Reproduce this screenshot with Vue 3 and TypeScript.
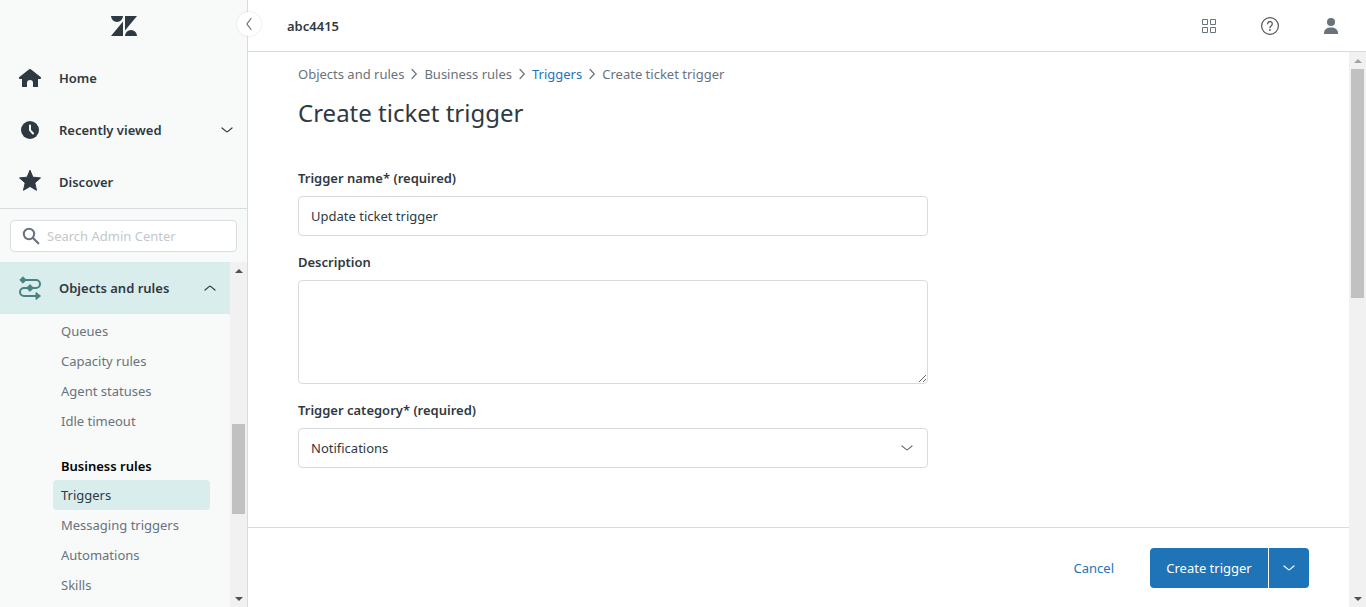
<script setup lang="ts">
import { ref } from 'vue'

interface NavGroup {
  heading?: string
  items: string[]
}

const groups: NavGroup[] = [
  { items: ['Queues', 'Capacity rules', 'Agent statuses', 'Idle timeout'] },
  { heading: 'Business rules', items: ['Triggers', 'Messaging triggers', 'Automations', 'Skills'] },
]

const crumbs: string[] = ['Objects and rules', 'Business rules', 'Triggers']
const activeItem = ref<string>('Triggers')
const search = ref<string>('')
const triggerName = ref<string>('Update ticket trigger')
const description = ref<string>('')
const category = ref<string>('Notifications')
</script>

<template>
  <div class="app">
    <aside class="sidebar">
      <div class="logo">
        <svg width="26" height="20" viewBox="0 0 26 20" role="img" aria-label="Zendesk">
          <path fill="#2f3941" d="M12 5.6V20H0zM12 0a6 6 0 0 1-12 0zM14 20a6 6 0 0 1 12 0zM14 14.4V0h12z" />
        </svg>
      </div>
      <button class="collapse" type="button" aria-label="Collapse sidebar">
        <svg width="16" height="16" viewBox="0 0 16 16">
          <path class="line" d="M10 2.5 6.3 7.4a1 1 0 0 0 0 1.2L10 13.5" />
        </svg>
      </button>

      <nav class="primary">
        <a class="row" href="#home">
          <svg class="row-icon" width="24" height="24" viewBox="0 0 24 24">
            <path fill="#2f3941" d="M11.2 3.300a1.300 1.300 0 0 1 1.600 0l9.800 7.600c.9.700.6 2.100-.6 2.100H20v8h-5v-4a3 3 0 0 0-6 0v4H4v-8H2c-1.200 0-1.500-1.400-.6-2.100z" />
          </svg>
          <span class="row-label">Home</span>
        </a>
        <button class="row" type="button">
          <svg class="row-icon" width="24" height="24" viewBox="0 0 24 24">
            <circle cx="12" cy="12" r="9" fill="#2f3941" />
            <path d="M12 7.500v4.700l3 3.300" fill="none" stroke="#f8faf9" stroke-width="2" stroke-linecap="round" stroke-linejoin="round" />
          </svg>
          <span class="row-label">Recently viewed</span>
          <svg width="16" height="16" viewBox="0 0 16 16">
            <path class="line dark" d="M3 6l4.400 3.600a1 1 0 0 0 1.200 0L13 6" />
          </svg>
        </button>
        <a class="row" href="#discover">
          <svg class="row-icon" width="24" height="24" viewBox="0 0 24 24">
            <path fill="#2f3941" stroke="#2f3941" stroke-linejoin="round" d="M12 .2l2.900 7 7.600.7-5.700 5 1.700 7.400-6.500-3.900-6.500 3.900 1.700-7.400-5.700-5 7.600-.7z" />
          </svg>
          <span class="row-label">Discover</span>
        </a>
      </nav>

      <div class="search-area">
        <label class="search">
          <svg width="18" height="18" viewBox="0 0 18 18">
            <circle cx="7" cy="7" r="5.200" fill="none" stroke="#68737d" stroke-width="2" />
            <path d="M11 11l5.300 5.300" stroke="#68737d" stroke-width="2.200" stroke-linecap="round" />
          </svg>
          <input v-model="search" type="search" aria-label="Search Admin Center" placeholder="Search Admin Center" />
        </label>
      </div>

      <div class="nav-scroll">
        <nav class="nav-body">
          <button class="row section" type="button" aria-expanded="true">
            <svg class="row-icon" width="24" height="24" viewBox="0 0 24 24">
              <path fill="none" stroke="#498283" stroke-width="2" d="M4 4h14a4 4 0 0 1 0 8H6a4 4 0 0 0 0 8h13" />
              <path fill="#498283" stroke="#498283" stroke-linejoin="round" d="M5 .8 8.200 4 5 7.200 1.800 4zM12 8.600l3.400 3.400-3.400 3.400L8.600 12zM18 16.500l4.500 3.500-4.500 3.500z" />
            </svg>
            <span class="row-label">Objects and rules</span>
            <svg width="16" height="16" viewBox="0 0 16 16">
              <path class="line dark" d="M3 10l4.400-3.600a1 1 0 0 1 1.200 0L13 10" />
            </svg>
          </button>
          <div v-for="(group, index) in groups" :key="index" class="group">
            <h2 v-if="group.heading">{{ group.heading }}</h2>
            <ul>
              <li v-for="item in group.items" :key="item">
                <a href="#item" :class="{ active: item === activeItem }" @click.prevent="activeItem = item">{{ item }}</a>
              </li>
            </ul>
          </div>
        </nav>
        <div class="scrollbar" aria-hidden="true">
          <span class="arrow up"></span>
          <span class="track"><span class="thumb nav-thumb"></span></span>
          <span class="arrow down"></span>
        </div>
      </div>
    </aside>

    <div class="page">
      <header class="topbar">
        <strong>abc4415</strong>
        <div class="tools">
          <button type="button" aria-label="Products">
            <svg width="20" height="20" viewBox="0 0 20 20">
              <path fill="none" stroke="#68737d" d="M3.500 3.500h5v5h-5zM11.500 3.500h5v5h-5zM3.500 11.500h5v5h-5zM11.500 11.500h5v5h-5z" />
            </svg>
          </button>
          <button type="button" aria-label="Help">
            <svg width="20" height="20" viewBox="0 0 20 20">
              <circle cx="10" cy="10" r="8.400" fill="none" stroke="#555" stroke-width="1.200" />
              <path d="M7.700 7.800a2.300 2.300 0 1 1 3.600 1.900c-.9.600-1.300 1-1.300 2" fill="none" stroke="#555" stroke-width="1.300" stroke-linecap="round" />
              <circle cx="10" cy="14" r=".9" fill="#555" />
            </svg>
          </button>
          <button type="button" aria-label="Profile">
            <svg width="20" height="20" viewBox="0 0 20 20">
              <circle cx="10" cy="6" r="4" fill="#68737d" />
              <path fill="#68737d" d="M3 18v-1c0-3.500 3-5.500 7-5.500s7 2 7 5.500v1z" />
            </svg>
          </button>
        </div>
      </header>

      <div class="workspace">
        <div class="column">
          <main class="content">
            <nav class="breadcrumb" aria-label="Breadcrumb">
              <template v-for="crumb in crumbs" :key="crumb">
                <a v-if="crumb === 'Triggers'" href="#triggers">{{ crumb }}</a>
                <span v-else>{{ crumb }}</span>
                <svg width="20" height="16" viewBox="0 0 20 16">
                  <path class="line" d="M8 3.500l4.300 4.500L8 12.500" />
                </svg>
              </template>
              <span>Create ticket trigger</span>
            </nav>
            <h1>Create ticket trigger</h1>

            <form id="trigger-form" @submit.prevent>
              <div class="field">
                <label for="trigger-name">Trigger name* (required)</label>
                <input id="trigger-name" v-model="triggerName" type="text" />
              </div>
              <div class="field">
                <label for="trigger-description">Description</label>
                <textarea id="trigger-description" v-model="description"></textarea>
              </div>
              <div class="field">
                <label for="trigger-category">Trigger category* (required)</label>
                <div class="select-wrap">
                  <select id="trigger-category" v-model="category">
                    <option>Notifications</option>
                  </select>
                  <svg width="16" height="16" viewBox="0 0 16 16">
                    <path class="line" d="M3 6l4.400 3.600a1 1 0 0 0 1.200 0L13 6" />
                  </svg>
                </div>
              </div>
            </form>
          </main>
          <footer class="actions">
            <button class="cancel" type="button">Cancel</button>
            <div class="split">
              <button class="create" type="submit" form="trigger-form">Create trigger</button>
              <button class="more" type="button" aria-label="More create options">
                <svg width="16" height="16" viewBox="0 0 16 16">
                  <path class="line light" d="M3 6l4.400 3.600a1 1 0 0 0 1.200 0L13 6" />
                </svg>
              </button>
            </div>
          </footer>
        </div>
        <div class="scrollbar" aria-hidden="true">
          <span class="arrow up idle"></span>
          <span class="track"><span class="thumb page-thumb"></span></span>
          <span class="arrow down"></span>
        </div>
      </div>
    </div>
  </div>
</template>

<style>
body {
  margin: 0;
  overflow: hidden;
}
</style>

<style scoped>
.app,
.app * {
  box-sizing: border-box;
}

.app {
  display: flex;
  height: 100vh;
  background: #fff;
  color: #2f3941;
  font-family: "Segoe UI", "Noto Sans", "Open Sans", sans-serif;
  font-size: 13px;
  line-height: 20px;
}

button,
input,
select,
textarea {
  margin: 0;
  border: 0;
  padding: 0;
  background: none;
  color: inherit;
  font: inherit;
}

button {
  cursor: pointer;
}

a {
  color: inherit;
  text-decoration: none;
}

svg {
  display: block;
  flex: none;
}

.line {
  fill: none;
  stroke: #68737d;
  stroke-width: 1.2;
  stroke-linecap: round;
}

.line.dark {
  stroke: #2f3941;
}

.line.light {
  stroke: #fff;
}

.sidebar {
  position: relative;
  display: flex;
  flex: none;
  flex-direction: column;
  width: 248px;
  border-right: 1px solid #d8dcde;
  background: #f8faf9;
}

.logo {
  display: flex;
  flex: none;
  align-items: center;
  justify-content: center;
  height: 52px;
}

.collapse {
  position: absolute;
  top: 12px;
  right: -14px;
  display: grid;
  place-items: center;
  width: 24px;
  height: 24px;
  border-radius: 50%;
  background: #fff;
  box-shadow: 0 0 2px rgba(47, 57, 65, 0.2);
}

.primary {
  flex: none;
  border-bottom: 1px solid #d8dcde;
}

.row {
  display: flex;
  align-items: center;
  width: 100%;
  height: 52px;
  padding: 0 12px 0 18px;
  text-align: left;
}

.row-label {
  flex: 1;
  padding-left: 17px;
  font-weight: 600;
}

.search-area {
  flex: none;
  padding: 11px 10px 10px;
}

.search {
  display: flex;
  align-items: center;
  gap: 7px;
  height: 32px;
  border: 1px solid #d8dcde;
  border-radius: 4px;
  padding: 0 11px;
  background: #fff;
}

.search input {
  flex: 1;
  min-width: 0;
  outline: 0;
}

.search input::placeholder {
  color: #c2c8cc;
}

.nav-scroll {
  display: flex;
  flex: 1;
  min-height: 0;
}

.nav-body {
  flex: 1;
  overflow: hidden;
}

.section {
  background: #daeded;
}

.group {
  padding: 2px 20px 0 53px;
}

.group + .group {
  padding-top: 15px;
}

h2 {
  margin: 0;
  padding: 5px 8px 4px;
  color: #000;
  font-size: 13px;
  font-weight: 600;
  line-height: 20px;
}

ul {
  margin: 0;
  padding: 0;
  list-style: none;
}

.group a {
  display: block;
  border-radius: 4px;
  padding: 5px 8px;
  color: #68737d;
}

.group a.active {
  background: #daeded;
  color: #2f3941;
}

.scrollbar {
  display: flex;
  flex: none;
  flex-direction: column;
  width: 17px;
  background: #f1f1f1;
}

.arrow {
  display: grid;
  place-items: center;
  height: 17px;
}

.arrow::before {
  border: 4px solid transparent;
  content: "";
}

.arrow.up::before {
  border-top: 0;
  border-bottom-color: #505050;
}

.arrow.down::before {
  border-bottom: 0;
  border-top-color: #505050;
}

.arrow.idle::before {
  border-bottom-color: #a3a3a3;
}

.track {
  display: flex;
  flex: 1;
  flex-direction: column;
  align-items: center;
}

.thumb {
  width: 13px;
  background: #c1c1c1;
}

.nav-thumb {
  height: 29%;
  margin-top: 145px;
}

.page-thumb {
  height: 44%;
}

.page {
  display: flex;
  flex: 1;
  flex-direction: column;
  min-width: 0;
}

.topbar {
  display: flex;
  flex: none;
  align-items: center;
  justify-content: space-between;
  height: 52px;
  border-bottom: 1px solid #d8dcde;
  padding: 0 25px 0 39px;
}

.topbar strong {
  font-weight: 600;
}

.tools {
  display: flex;
  gap: 41px;
}

.workspace {
  display: flex;
  flex: 1;
  min-height: 0;
}

.column {
  display: flex;
  flex: 1;
  flex-direction: column;
  min-width: 0;
}

.content {
  flex: 1;
  min-height: 0;
  overflow: hidden;
  padding: 12px 50px 0;
}

.breadcrumb {
  display: flex;
  align-items: center;
  color: #68737d;
}

.breadcrumb a,
.cancel {
  color: #1f73b7;
}

h1 {
  margin: 13px 0 39px;
  font-size: 24px;
  font-weight: 400;
  line-height: 32px;
}

form {
  max-width: 630px;
}

.field {
  display: flex;
  flex-direction: column;
  gap: 8px;
  margin-bottom: 16px;
}

.field label {
  font-weight: 600;
}

.field input,
.field textarea,
.field select {
  display: block;
  width: 100%;
  height: 40px;
  border: 1px solid #d8dcde;
  border-radius: 4px;
  padding: 0 12px;
  background: #fff;
}

.field textarea {
  height: 104px;
  padding: 10px 12px;
  resize: vertical;
}

.field select {
  appearance: none;
}

.select-wrap {
  display: grid;
  align-items: center;
}

.select-wrap > * {
  grid-area: 1 / 1;
}

.select-wrap svg {
  justify-self: end;
  margin-right: 13px;
  pointer-events: none;
}

.actions {
  display: flex;
  flex: none;
  align-items: center;
  justify-content: flex-end;
  gap: 36px;
  height: 80px;
  border-top: 1px solid #d8dcde;
  padding: 0 40px;
}

.split {
  display: flex;
  gap: 1px;
}

.split button {
  display: grid;
  place-items: center;
  height: 40px;
  background: #1f73b7;
  color: #fff;
}

.split .create {
  min-width: 118px;
  border-radius: 4px 0 0 4px;
  padding: 0 12px;
}

.split .more {
  width: 40px;
  border-radius: 0 4px 4px 0;
}
</style>
